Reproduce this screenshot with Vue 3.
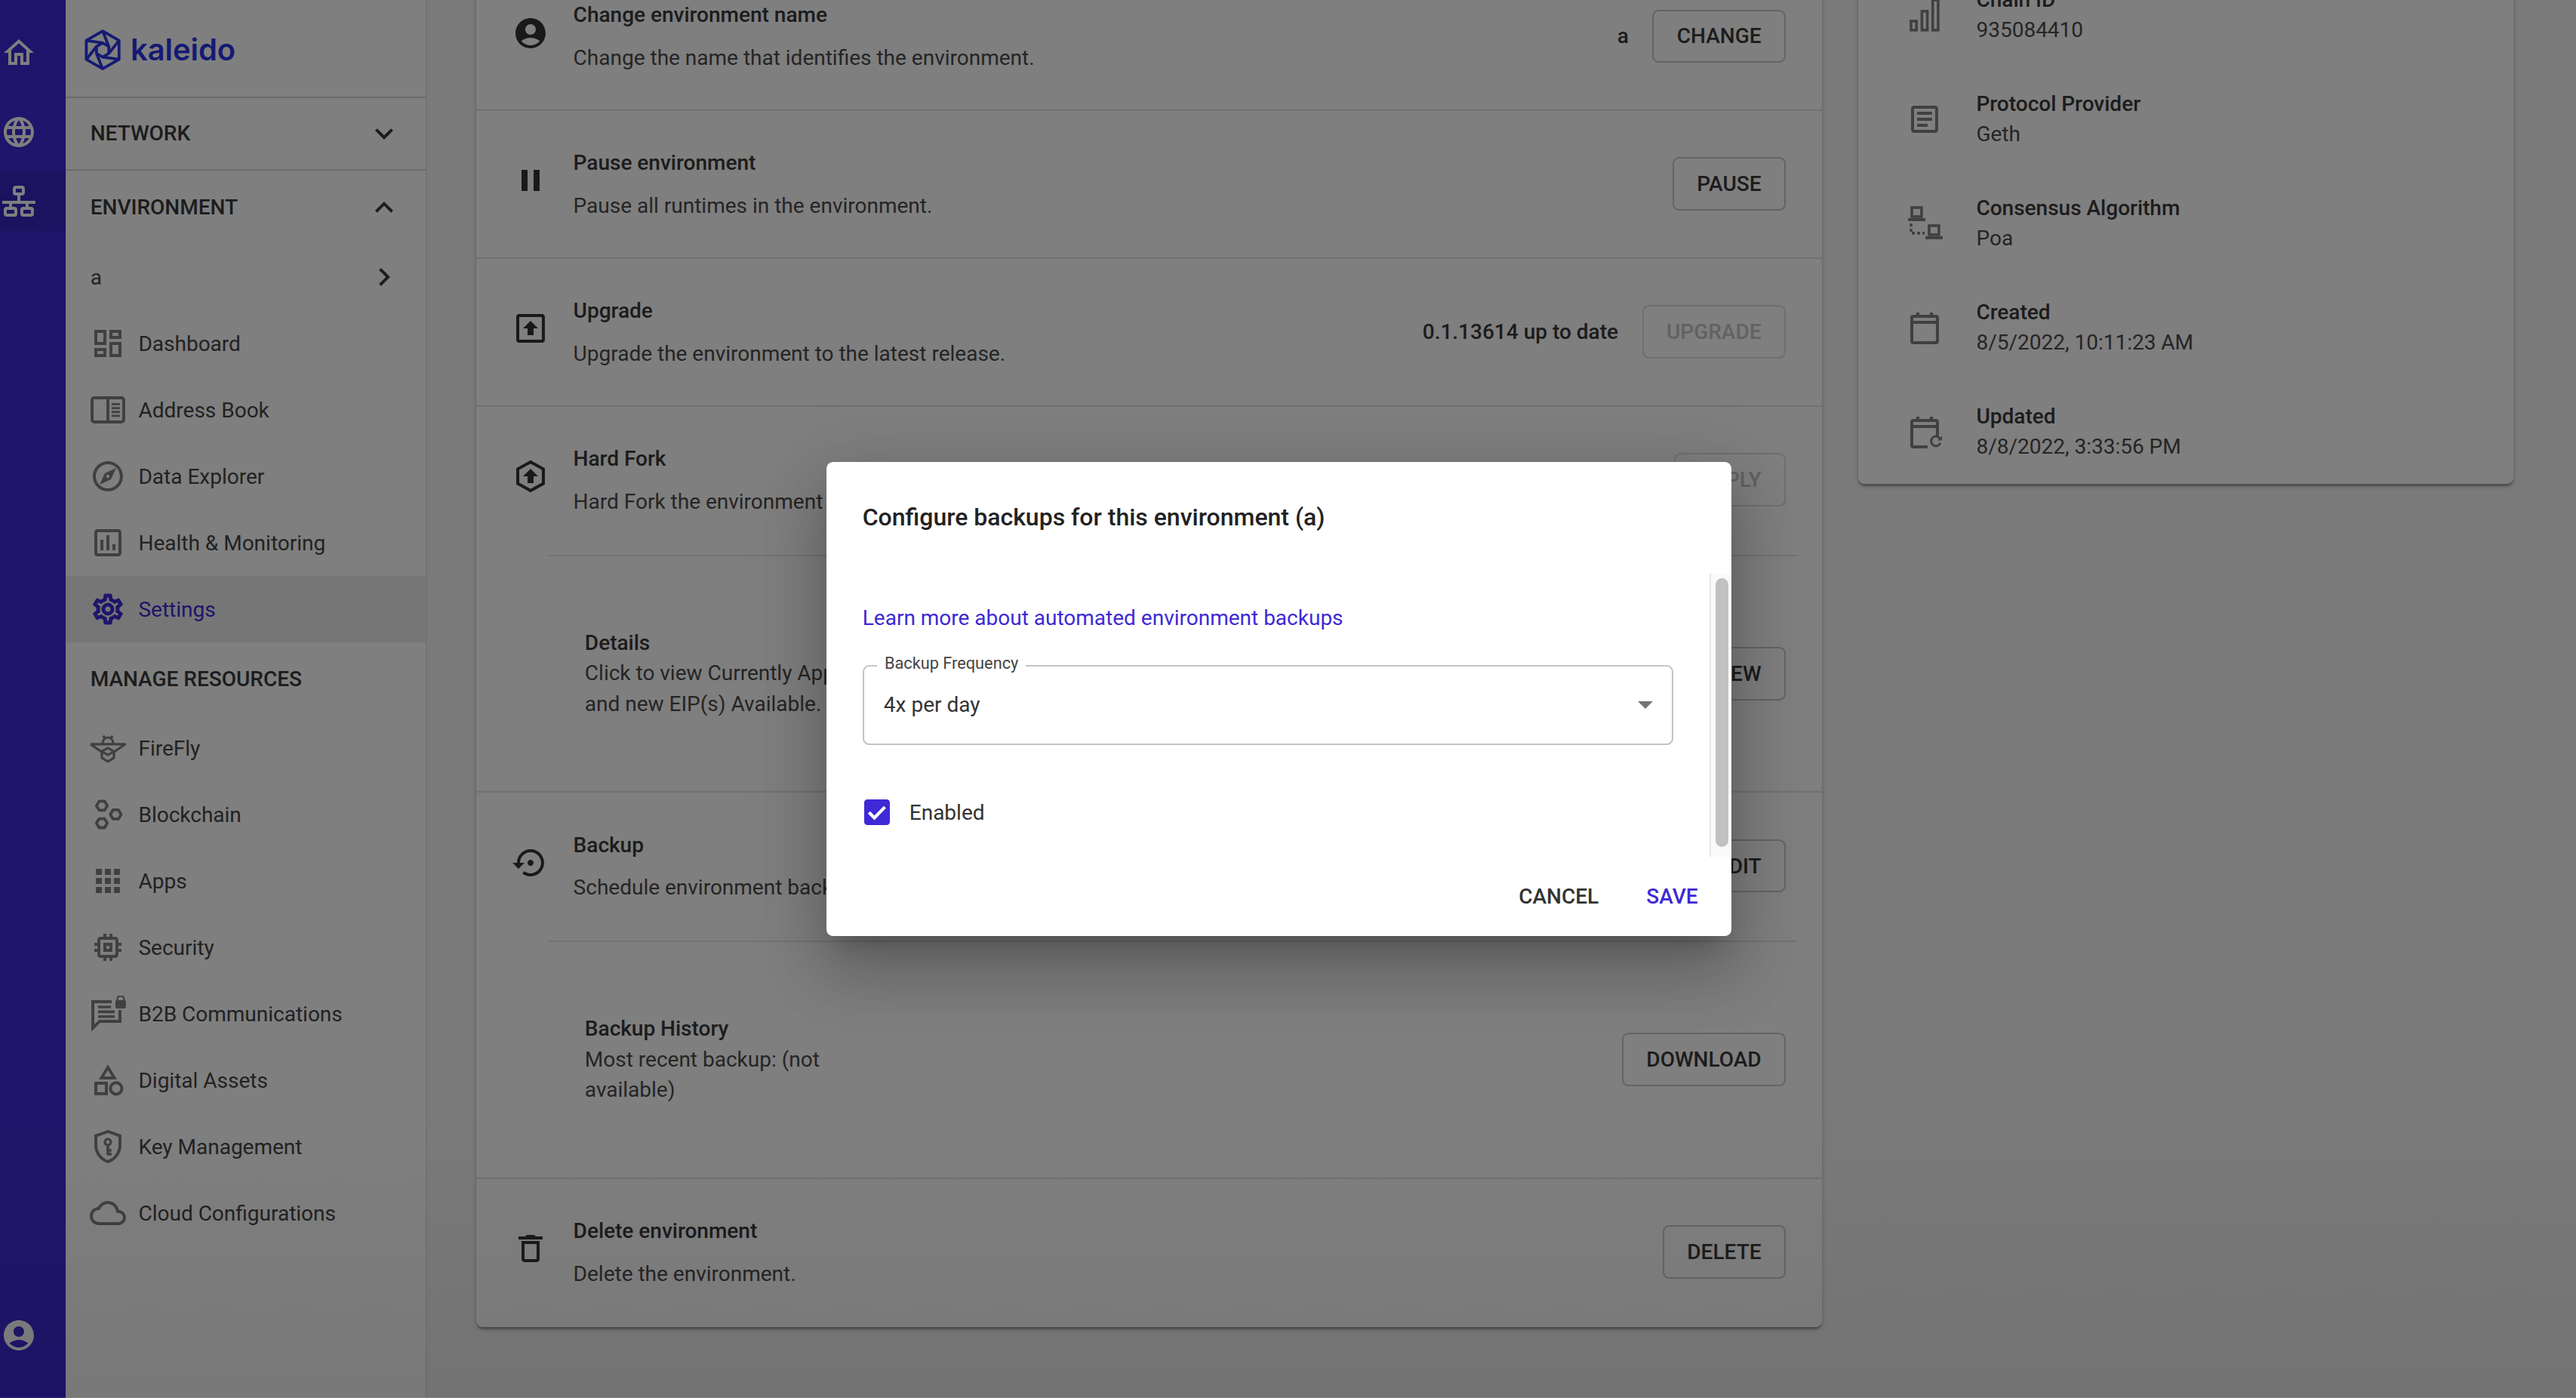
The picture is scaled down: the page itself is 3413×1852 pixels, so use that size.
<script setup>
const P = {
  home: '<path d="M12 5.69l5 4.5V18h-2v-6H9v6H7v-7.81l5-4.5M12 3L2 12h3v8h6v-6h2v6h6v-8h3L12 3z"/>',
  globe: '<path d="M11.99 2C6.47 2 2 6.48 2 12s4.47 10 9.99 10C17.52 22 22 17.52 22 12S17.52 2 11.99 2zm6.93 6h-2.95c-.32-1.25-.78-2.45-1.38-3.56 1.84.63 3.37 1.91 4.33 3.56zM12 4.04c.83 1.2 1.48 2.53 1.91 3.96h-3.82c.43-1.43 1.08-2.76 1.91-3.96zM4.26 14C4.1 13.36 4 12.69 4 12s.1-1.36.26-2h3.38c-.08.66-.14 1.32-.14 2 0 .68.06 1.34.14 2H4.26zm.82 2h2.95c.32 1.25.78 2.45 1.38 3.56-1.84-.63-3.37-1.9-4.33-3.56zm2.95-8H5.08c.96-1.66 2.49-2.93 4.33-3.56C8.81 5.55 8.35 6.75 8.03 8zM12 19.96c-.83-1.2-1.48-2.53-1.91-3.96h3.82c-.43 1.43-1.08 2.76-1.91 3.96zM14.34 14H9.66c-.09-.66-.16-1.32-.16-2 0-.68.07-1.35.16-2h4.68c.09.65.16 1.32.16 2 0 .68-.07 1.34-.16 2zm.25 5.56c.6-1.11 1.06-2.31 1.38-3.56h2.95c-.96 1.65-2.49 2.93-4.33 3.56zM16.36 14c.08-.66.14-1.32.14-2 0-.68-.06-1.34-.14-2h3.38c.16.64.26 1.31.26 2s-.1 1.36-.26 2h-3.38z"/>',
  lan: '<g fill="none" stroke="currentColor" stroke-width="2"><rect x="9" y="2.500" width="6" height="4.500" rx="1"/><path d="M12 7v5.500M1 12.500h22M6.500 12.500v4M17.500 12.500v4"/><rect x="3" y="16.500" width="7" height="4.500" rx="1"/><rect x="14" y="16.500" width="7" height="4.500" rx="1"/></g>',
  account: '<path d="M12 2C6.48 2 2 6.48 2 12s4.48 10 10 10 10-4.48 10-10S17.52 2 12 2zm0 4c1.93 0 3.5 1.57 3.5 3.5S13.93 13 12 13s-3.5-1.57-3.5-3.5S10.07 6 12 6zm0 14c-2.03 0-4.43-.82-6.14-2.88C7.55 15.8 9.68 15 12 15s4.45.8 6.14 2.12C16.43 19.18 14.03 20 12 20z"/>',
  more: '<path d="M16.59 8.59L12 13.17 7.41 8.59 6 10l6 6 6-6z"/>',
  less: '<path d="M12 8l-6 6 1.41 1.41L12 10.83l4.59 4.58L18 14z"/>',
  right: '<path d="M10 6L8.59 7.41 13.17 12l-4.58 4.59L10 18l6-6z"/>',
  dashboard: '<path d="M19 5v2h-4V5h4M9 5v6H5V5h4m10 8v6h-4v-6h4M9 17v2H5v-2h4M21 3h-8v6h8V3zM11 3H3v10h8V3zm10 8h-8v10h8V11zm-10 4H3v6h8v-6z"/>',
  book: '<g fill="none" stroke="currentColor"><rect x="1.500" y="4" width="21" height="16" rx="1.500" stroke-width="2"/><path d="M12 4v16" stroke-width="2"/><path d="M14.500 8.200h5.500M14.500 10.800h5.500M14.500 13.400h5.500M14.500 16h5.500" stroke-width="1.400"/></g>',
  explore: '<path d="M12 2C6.48 2 2 6.48 2 12s4.48 10 10 10 10-4.48 10-10S17.52 2 12 2zm0 18c-4.41 0-8-3.59-8-8s3.59-8 8-8 8 3.59 8 8-3.59 8-8 8zm-5.5-2.5l7.51-3.49L17.5 6.5 9.99 9.99 6.5 17.5zm5.5-6.6c.61 0 1.1.49 1.1 1.1s-.49 1.1-1.1 1.1-1.1-.49-1.1-1.1.49-1.1 1.1-1.1z"/>',
  assess: '<path d="M19 3H5c-1.1 0-2 .9-2 2v14c0 1.1.9 2 2 2h14c1.1 0 2-.9 2-2V5c0-1.1-.9-2-2-2zm0 16H5V5h14v14zM7 10h2v7H7zm4-3h2v10h-2zm4 6h2v4h-2z"/>',
  gear: '<path d="M19.43 12.98c.04-.32.07-.64.07-.98 0-.34-.03-.66-.07-.98l2.11-1.65c.19-.15.24-.42.12-.64l-2-3.46c-.09-.16-.26-.25-.44-.25-.06 0-.12.01-.17.03l-2.49 1c-.52-.4-1.08-.73-1.69-.98l-.38-2.65C14.46 2.18 14.25 2 14 2h-4c-.25 0-.46.18-.49.42l-.38 2.65c-.61.25-1.17.59-1.69.98l-2.49-1c-.06-.02-.12-.03-.18-.03-.17 0-.34.09-.43.25l-2 3.46c-.13.22-.07.49.12.64l2.11 1.65c-.04.32-.07.65-.07.98 0 .33.03.66.07.98l-2.11 1.65c-.19.15-.24.42-.12.64l2 3.46c.09.16.26.25.44.25.06 0 .12-.01.17-.03l2.49-1c.52.4 1.08.73 1.69.98l.38 2.65c.03.24.24.42.49.42h4c.25 0 .46-.18.49-.42l.38-2.65c.61-.25 1.17-.59 1.69-.98l2.49 1c.06.02.12.03.18.03.17 0 .34-.09.43-.25l2-3.46c.12-.22.07-.49-.12-.64l-2.11-1.65zm-1.98-1.71c.04.31.05.52.05.73 0 .21-.02.43-.05.73l-.14 1.13.89.7 1.08.84-.7 1.21-1.27-.51-1.04-.42-.9.68c-.43.32-.84.56-1.25.73l-1.06.43-.16 1.13-.2 1.35h-1.4l-.19-1.35-.16-1.13-1.06-.43c-.43-.18-.83-.41-1.23-.71l-.91-.7-1.06.43-1.27.51-.7-1.21 1.08-.84.89-.7-.14-1.13c-.03-.31-.05-.54-.05-.74s.02-.43.05-.73l.14-1.13-.89-.7-1.08-.84.7-1.21 1.27.51 1.04.42.9-.68c.43-.32.84-.56 1.25-.73l1.06-.43.16-1.13.2-1.35h1.39l.19 1.35.16 1.13 1.06.43c.43.18.83.41 1.23.71l.91.7 1.06-.43 1.27-.51.7 1.21-1.07.85-.89.7.14 1.13zM12 8c-2.21 0-4 1.79-4 4s1.79 4 4 4 4-1.79 4-4-1.79-4-4-4zm0 6c-1.1 0-2-.9-2-2s.9-2 2-2 2 .9 2 2-.9 2-2 2z" stroke="currentColor" stroke-width=".5"/>',
  firefly: '<g fill="none" stroke="currentColor" stroke-width="1.600" stroke-linejoin="round"><path d="M.5 9.500h23L15.500 15M.5 9.500L8.500 15"/><path d="M12 12l4 2.200v4.400L12 21l-4-2.400v-4.400z"/><path d="M8 14.400l4 2.200 4-2.200"/><path d="M8.500 9.500c0-3 1.500-4.500 3.500-4.500s3.500 1.500 3.500 4.500M8.800 4l1.600 1.600M15.200 4l-1.600 1.600"/></g>',
  chain: '<g fill="none" stroke="currentColor" stroke-width="1.900" stroke-linejoin="round"><path d="M4.400 6.200L6.200 3.200h3.600l1.800 3-1.800 3H6.200z"/><path d="M13.600 12l1.800-3h3.600l1.800 3-1.800 3h-3.600z"/><path d="M4.400 17.800l1.800-3h3.600l1.800 3-1.800 3H6.200z"/></g>',
  apps: '<path d="M4 8h4V4H4v4zm6 12h4v-4h-4v4zm-6 0h4v-4H4v4zm0-6h4v-4H4v4zm6 0h4v-4h-4v4zm6-10v4h4V4h-4zm-6 4h4V4h-4v4zm6 6h4v-4h-4v4zm0 6h4v-4h-4v4z"/>',
  memory: '<path d="M15 9H9v6h6V9zm-2 4h-2v-2h2v2zm8-2V9h-2V7c0-1.1-.9-2-2-2h-2V3h-2v2h-2V3H9v2H7c-1.1 0-2 .9-2 2v2H3v2h2v2H3v2h2v2c0 1.1.9 2 2 2h2v2h2v-2h2v2h2v-2h2c1.1 0 2-.9 2-2v-2h2v-2h-2v-2h2zm-4 6H7V7h10v10z"/>',
  b2b: '<path d="M20 9.500V17H6.500L2 21.500V4h12.500" fill="none" stroke="currentColor" stroke-width="2"/><path d="M5.500 7.500h8.500M5.500 10.700h11M5.500 13.900h11" stroke="currentColor" stroke-width="1.800"/><rect x="17" y="3" width="7" height="5.500" rx="1"/><path d="M18.300 3.500V2.300a2.200 2.200 0 0 1 4.400 0v1.200" fill="none" stroke="currentColor" stroke-width="1.200"/>',
  assets: '<g fill="none" stroke="currentColor" stroke-width="2"><path d="M12 3.500L16.300 10.500H7.700z"/><rect x="4" y="14" width="7" height="7"/><circle cx="17.500" cy="17.500" r="3.800"/></g>',
  key: '<g fill="none" stroke="currentColor"><path d="M12 2l8 2.800V11c0 5.200-3.300 9.500-8 11-4.700-1.500-8-5.800-8-11V4.800z" stroke-width="2"/><circle cx="12" cy="9" r="2" stroke-width="1.600"/><path d="M12 11v6.500M12 14.500h2.400M12 17h2.400" stroke-width="1.800"/></g>',
  cloud: '<path d="M19.35 10.04C18.67 6.59 15.64 4 12 4 9.11 4 6.6 5.64 5.35 8.04 2.34 8.36 0 10.91 0 14c0 3.31 2.69 6 6 6h13c2.76 0 5-2.24 5-5 0-2.64-2.05-4.78-4.65-4.96zM19 18H6c-2.21 0-4-1.79-4-4 0-2.05 1.53-3.76 3.56-3.97l1.07-.11.5-.95C8.08 7.14 9.94 6 12 6c2.62 0 4.88 1.86 5.39 4.43l.3 1.5 1.53.11c1.56.1 2.78 1.41 2.78 2.96 0 1.65-1.35 3-3 3z"/>',
  pause: '<path d="M6 19h4V5H6v14zm8-14v14h4V5h-4z"/>',
  upgrade: '<rect x="3.500" y="3.500" width="17" height="17" rx="1" fill="none" stroke="currentColor" stroke-width="2"/><path d="M12 7l5 5h-3v4.500h-4V12H7z"/>',
  fork: '<path d="M12 2.500l8.500 4.700v9.600L12 21.500l-8.500-4.700V7.200z" fill="none" stroke="currentColor" stroke-width="2"/><path d="M12 7l5 5h-3v4.500h-4V12H7z"/>',
  restore: '<path d="M14 12c0-1.100-.9-2-2-2s-2 .9-2 2 .9 2 2 2 2-.9 2-2zm-2-9c-4.970 0-9 4.030-9 9H0l4 4 4-4H5c0-3.870 3.130-7 7-7s7 3.130 7 7-3.130 7-7 7c-1.510 0-2.910-.49-4.060-1.300l-1.420 1.440C8.040 20.300 9.940 21 12 21c4.970 0 9-4.030 9-9s-4.030-9-9-9z"/>',
  trash: '<path d="M16 9v10H8V9h8m-1.500-6h-5l-1 1H4v2h16V4h-4.500l-1-1zM18 7H6v12c0 1.100.9 2 2 2h8c1.100 0 2-.9 2-2V7z"/>',
  bars: '<g fill="none" stroke="currentColor" stroke-width="1.800"><rect x="3" y="16" width="3.600" height="6"/><rect x="10.200" y="9.500" width="3.600" height="12.500"/><rect x="17.400" y="2" width="3.600" height="20"/></g>',
  doc: '<path d="M19 5v14H5V5h14m0-2H5c-1.100 0-2 .9-2 2v14c0 1.100.9 2 2 2h14c1.100 0 2-.9 2-2V5c0-1.100-.9-2-2-2z"/><path d="M14 17H7v-2h7v2zm3-4H7v-2h10v2zm0-4H7V7h10v2z"/>',
  consensus: '<g fill="none" stroke="currentColor" stroke-width="1.800"><rect x="3.500" y="1.500" width="6.500" height="6"/><path d="M1 9.500h11.500" stroke-width="2"/><rect x="15" y="13.500" width="6.500" height="6"/><path d="M12.500 21.500H24" stroke-width="2"/><path d="M3 12v6.500h9" stroke-dasharray="2 1.500"/></g>',
  cal: '<g fill="none" stroke="currentColor" stroke-width="2"><rect x="3.500" y="4.500" width="17" height="17.500" rx="1"/><path d="M3.500 8.500h17M7.500 2v2.500M16.500 2v2.500" /></g>',
  calsync: '<g fill="none" stroke="currentColor" stroke-width="2"><path d="M14 22H4.500a1 1 0 0 1-1-1V5.500a1 1 0 0 1 1-1h15a1 1 0 0 1 1 1v9"/><path d="M3.500 8.500h17M7.500 2v2.500M16.500 2v2.500"/><path d="M22.200 16.500a3.200 3.200 0 1 0 .3 3" stroke-width="1.500"/></g><path d="M23.500 14.800v3h-3z"/>'
}

const railTop = [
  { icon: 'home' },
  { icon: 'globe' },
  { icon: 'lan', active: true }
]
const envItems = [
  { label: 'Dashboard', icon: 'dashboard' },
  { label: 'Address Book', icon: 'book' },
  { label: 'Data Explorer', icon: 'explore' },
  { label: 'Health & Monitoring', icon: 'assess' },
  { label: 'Settings', icon: 'gear', active: true }
]
const resItems = [
  { label: 'FireFly', icon: 'firefly' },
  { label: 'Blockchain', icon: 'chain' },
  { label: 'Apps', icon: 'apps' },
  { label: 'Security', icon: 'memory' },
  { label: 'B2B Communications', icon: 'b2b' },
  { label: 'Digital Assets', icon: 'assets' },
  { label: 'Key Management', icon: 'key' },
  { label: 'Cloud Configurations', icon: 'cloud' }
]
const sections = [
  { icon: 'account', title: 'Change environment name', desc: 'Change the name that identifies the environment.', note: 'a', button: 'CHANGE' },
  { icon: 'pause', title: 'Pause environment', desc: 'Pause all runtimes in the environment.', button: 'PAUSE' },
  { icon: 'upgrade', title: 'Upgrade', desc: 'Upgrade the environment to the latest release.', note: '0.1.13614 up to date', button: 'UPGRADE', disabled: true },
  { icon: 'fork', title: 'Hard Fork', desc: 'Hard Fork the environment to the latest EIPs.', button: 'APPLY', disabled: true,
    sub: { title: 'Details', lines: ['Click to view Currently Applied', 'and new EIP(s) Available.'], button: 'VIEW' } },
  { icon: 'restore', title: 'Backup', desc: 'Schedule environment backups.', button: 'EDIT',
    sub: { title: 'Backup History', lines: ['Most recent backup: (not', 'available)'], button: 'DOWNLOAD' } },
  { icon: 'trash', title: 'Delete environment', desc: 'Delete the environment.', button: 'DELETE' }
]
const facts = [
  { icon: 'bars', title: 'Chain ID', value: '935084410' },
  { icon: 'doc', title: 'Protocol Provider', value: 'Geth' },
  { icon: 'consensus', title: 'Consensus Algorithm', value: 'Poa' },
  { icon: 'cal', title: 'Created', value: '8/5/2022, 10:11:23 AM' },
  { icon: 'calsync', title: 'Updated', value: '8/8/2022, 3:33:56 PM' }
]
</script>

<template>
  <div class="screen">
    <nav class="rail">
      <div class="rail-top">
        <div v-for="r in railTop" :key="r.icon" class="rail-btn" :class="{ on: r.active }">
          <svg class="ic" viewBox="0 0 24 24" fill="currentColor" v-html="P[r.icon]"></svg>
        </div>
      </div>
      <div class="rail-btn"><svg class="ic" viewBox="0 0 24 24" fill="currentColor" v-html="P.account"></svg></div>
    </nav>

    <aside class="side">
      <div class="logo">
        <svg class="logo-mark" viewBox="0 0 24 26" fill="none" stroke="currentColor" stroke-width="1.800" stroke-linejoin="round">
          <path d="M12 1l10.400 6v12L12 25 1.600 19V7z"/>
          <path d="M12 1l3.900 9.750M22.400 7l-6.500 8.250M22.400 19L12 17.500M12 25l-3.900-9.750M1.600 19l6.500-8.250M1.600 7L12 8.500"/>
          <path d="M15.900 10.750v4.500L12 17.500l-3.900-2.250v-4.500L12 8.500z"/>
        </svg>
        <span class="logo-text">kaleido</span>
      </div>
      <div class="group-row bordered">
        <span>NETWORK</span>
        <svg class="ic dark" viewBox="0 0 24 24" fill="currentColor" v-html="P.more"></svg>
      </div>
      <div class="group-row">
        <span>ENVIRONMENT</span>
        <svg class="ic dark" viewBox="0 0 24 24" fill="currentColor" v-html="P.less"></svg>
      </div>
      <div class="env-row">
        <span>a</span>
        <svg class="ic dark" viewBox="0 0 24 24" fill="currentColor" v-html="P.right"></svg>
      </div>
      <div v-for="i in envItems" :key="i.label" class="item" :class="{ on: i.active }">
        <svg class="ic" viewBox="0 0 24 24" fill="currentColor" v-html="P[i.icon]"></svg>
        <span>{{ i.label }}</span>
      </div>
      <div class="res-head">MANAGE RESOURCES</div>
      <div v-for="i in resItems" :key="i.label" class="item">
        <svg class="ic" viewBox="0 0 24 24" fill="currentColor" v-html="P[i.icon]"></svg>
        <span>{{ i.label }}</span>
      </div>
    </aside>

    <main class="main">
      <section class="card settings">
        <div v-for="s in sections" :key="s.title" class="section">
          <div class="row">
            <svg class="ic row-ic" viewBox="0 0 24 24" fill="currentColor" v-html="P[s.icon]"></svg>
            <div class="row-text">
              <div class="t">{{ s.title }}</div>
              <div class="d">{{ s.desc }}</div>
            </div>
            <span v-if="s.note" class="note">{{ s.note }}</span>
            <button class="btn" :class="{ off: s.disabled }">{{ s.button }}</button>
          </div>
          <div v-if="s.sub" class="sub">
            <div class="sub-text">
              <div class="t">{{ s.sub.title }}</div>
              <div v-for="l in s.sub.lines" :key="l" class="d">{{ l }}</div>
            </div>
            <button class="btn">{{ s.sub.button }}</button>
          </div>
        </div>
      </section>

      <section class="card facts">
        <div v-for="f in facts" :key="f.title" class="fact">
          <svg class="ic" viewBox="0 0 24 24" fill="currentColor" v-html="P[f.icon]"></svg>
          <div>
            <div class="t">{{ f.title }}</div>
            <div class="d">{{ f.value }}</div>
          </div>
        </div>
      </section>
    </main>

    <div class="overlay">
      <div class="dialog">
        <h2 class="dlg-title">Configure backups for this environment (a)</h2>
        <div class="dlg-body">
          <a class="dlg-link">Learn more about automated environment backups</a>
          <div class="select">
            <span class="select-label">Backup Frequency</span>
            <span>4x per day</span>
            <span class="caret"></span>
          </div>
          <label class="check">
            <span class="box">
              <svg viewBox="0 0 16 16" fill="none" stroke="#fff" stroke-width="2"><path d="M3 8.200l3.400 3.400L13 4.800"/></svg>
            </span>
            <span>Enabled</span>
          </label>
          <div class="track"><div class="thumb"></div></div>
        </div>
        <div class="dlg-actions">
          <span class="act">CANCEL</span>
          <span class="act primary">SAVE</span>
        </div>
      </div>
    </div>
  </div>
</template>

<style>
html, body { margin: 0; background: #f4f4f4; }
</style>

<style scoped>
.screen {
  zoom: 2.17666;
  position: relative;
  display: flex;
  width: 1568px;
  height: 851px;
  overflow: hidden;
  background: #f4f4f4;
  font-family: Roboto, "Liberation Sans", sans-serif;
  font-size: 12.870px;
  color: #333;
}
.ic { width: 22px; height: 22px; flex: none; display: block; }

.rail {
  width: 40px;
  flex: none;
  background: #3e29d6;
  color: #fff;
  display: flex;
  flex-direction: column;
  justify-content: space-between;
  padding: 13.900px 0 20px;
  box-sizing: border-box;
}
.rail-top { display: flex; flex-direction: column; gap: 12.100px; }
.rail-btn {
  height: 36.200px;
  display: flex;
  align-items: center;
  padding-left: .5px;
}
.rail-btn.on { background: #3624c0; margin-top: -6px; }

.side {
  width: 220px;
  flex: none;
  background: #fff;
  border-right: 1px solid #e6e6e6;
  box-sizing: border-box;
}
.logo {
  height: 59.500px;
  display: flex;
  align-items: center;
  padding: 2px 0 0 11px;
  box-sizing: border-box;
  border-bottom: 1px solid #d6d6d6;
  gap: 5.500px;
}
.logo-mark { width: 23px; height: 25px; color: #2a34e8; flex: none; }
.logo-text {
  font-family: Inter, sans-serif;
  font-size: 18.300px;
  font-weight: 600;
  color: #2a34e8;
  line-height: 1;
}
.group-row {
  height: 44.500px;
  display: flex;
  align-items: center;
  justify-content: space-between;
  padding: 0 14.500px 0 15px;
  box-sizing: border-box;
  font-weight: 500;
  color: #383838;
}
.group-row.bordered { border-bottom: 1px solid #d6d6d6; }
.env-row {
  height: 40.500px;
  display: flex;
  align-items: center;
  justify-content: space-between;
  padding: 0 14.500px 0 15px;
  color: #444;
}
.dark { color: #383838; }
.item {
  height: 40.430px;
  display: flex;
  align-items: center;
  padding-left: 14.800px;
  gap: 7.500px;
  color: #444;
}
.item .ic { color: #808080; }
.item.on { background: #ececec; color: #3e29d6; }
.item.on .ic { color: #3e29d6; }
.res-head {
  height: 44px;
  display: flex;
  align-items: center;
  padding-left: 15px;
  font-weight: 500;
  color: #383838;
}

.main {
  flex: 1;
  display: flex;
  align-items: flex-start;
  gap: 22px;
  padding-left: 30px;
  margin-top: -22.500px;
}
.card {
  background: #fff;
  border-radius: 4px;
  box-shadow: 0 1px 3px rgba(0,0,0,.2), 0 1px 1px rgba(0,0,0,.14), 0 2px 1px -1px rgba(0,0,0,.12);
}
.settings { width: 819px; flex: none; }
.section { box-shadow: inset 0 -1px 0 #e2e2e2; }
.section:last-child { box-shadow: none; }
.row {
  height: 90px;
  display: flex;
  align-items: center;
  padding: 0 22px;
  box-sizing: border-box;
}
.row-ic { color: #333; margin: 0 15px 5px 0; }
.row-text { flex: 1; }
.t { font-weight: 500; color: #383838; line-height: 18.600px; }
.d { color: #4a4a4a; line-height: 18.600px; }
.row-text .d { margin-top: 7.400px; }
.note { font-weight: 500; color: #383838; margin: 0 14.500px 1px 0; }
.btn {
  height: 32.500px;
  margin-bottom: 1px;
  padding: 0 14px;
  border: 1px solid #c9c9c9;
  border-radius: 4px;
  background: transparent;
  font: 500 12.870px Roboto, sans-serif;
  color: #383838;
  box-sizing: border-box;
}
.btn.off { color: #c4c4c4; border-color: #dedede; }
.sub {
  height: 145px;
  box-sizing: border-box;
  margin: 0 15px 0 44px;
  padding: 0 7px 0 22px;
  border-top: 1px solid #e2e2e2;
  display: flex;
  align-items: center;
  justify-content: space-between;
}
.sub-text { margin-bottom: 1px; }
.facts { width: 399px; flex: none; }
.fact {
  height: 63.400px;
  display: flex;
  align-items: center;
  padding-left: 29.500px;
  gap: 20.500px;
}
.fact .ic { color: #808080; }

.overlay {
  position: absolute;
  inset: 0;
  background: linear-gradient(to bottom, rgba(0,0,0,.5) 80%, rgba(0,0,0,.53) 100%);
  display: flex;
  align-items: center;
  justify-content: center;
  padding-right: 11px;
}
.overlay::after {
  content: "";
  position: absolute;
  left: 0;
  right: 0;
  bottom: 0;
  height: .8px;
  background: rgba(255,255,255,.1);
}
.dialog {
  width: 551px;
  height: 288.500px;
  background: #fff;
  border-radius: 4px;
  display: flex;
  flex-direction: column;
  box-shadow: 0 11px 15px -7px rgba(0,0,0,.2), 0 24px 38px 3px rgba(0,0,0,.14), 0 9px 46px 8px rgba(0,0,0,.12);
}
.dlg-title {
  margin: 0;
  height: 68px;
  flex: none;
  box-sizing: border-box;
  padding: 0 22px 1px;
  display: flex;
  align-items: center;
  font-size: 14.700px;
  font-weight: 500;
  color: #222;
}
.dlg-body {
  position: relative;
  flex: 1;
  padding: 0 22px;
  display: flex;
  flex-direction: column;
  align-items: flex-start;
  color: #333;
}
.dlg-link { margin-top: 18px; line-height: 18px; color: #3e29d6; }
.select {
  position: relative;
  margin-top: 19.500px;
  width: 493.500px;
  height: 48.500px;
  box-sizing: border-box;
  border: 1px solid #c4c4c4;
  border-radius: 4px;
  padding: 0 12px;
  display: flex;
  align-items: center;
  justify-content: space-between;
  color: #333;
}
.select-label {
  position: absolute;
  left: 8px;
  top: -8px;
  background: #fff;
  padding: 0 4.500px;
  font-size: 10px;
  line-height: 12px;
  color: #444;
}
.caret {
  width: 0;
  height: 0;
  margin-right: -.5px;
  border-left: 5px solid transparent;
  border-right: 5px solid transparent;
  border-top: 5px solid #757575;
}
.check {
  margin-top: 33.500px;
  display: flex;
  align-items: center;
  gap: 12px;
  margin-left: 1px;
}
.box {
  width: 15.500px;
  height: 15.500px;
  background: #3e29d6;
  border-radius: 2px;
  display: block;
}
.box svg { display: block; width: 100%; height: 100%; }
.track {
  position: absolute;
  right: 0;
  top: 0;
  bottom: 0;
  width: 13.500px;
  background: #fafafa;
  border-left: 1px solid #e8e8e8;
  box-sizing: border-box;
}
.thumb {
  position: absolute;
  left: 3px;
  right: 2px;
  top: 2.500px;
  bottom: 6px;
  border-radius: 4px;
  background: #c1c1c1;
}
.dlg-actions {
  height: 48.500px;
  flex: none;
  display: flex;
  align-items: center;
  justify-content: flex-end;
  gap: 29px;
  padding-right: 20.500px;
}
.act { font-weight: 500; color: #333; }
.act.primary { color: #3e29d6; }
</style>
